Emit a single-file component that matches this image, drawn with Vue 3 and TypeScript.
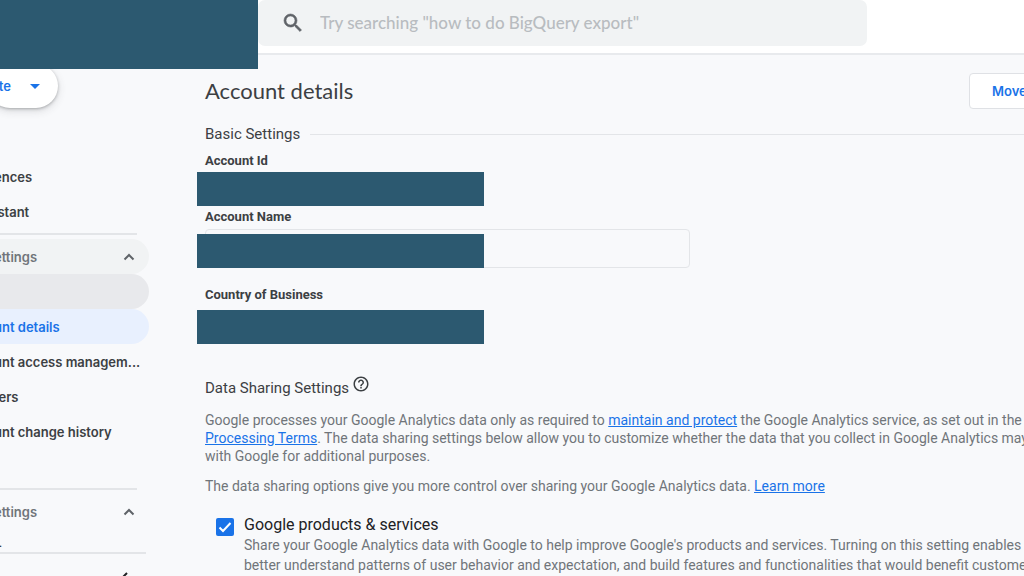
<script setup lang="ts">
import { ref } from 'vue'

interface NavItem {
  label: string
  kind?: 'group' | 'hover' | 'active'
}

const topItems: NavItem[] = [{ label: 'ences' }, { label: 'istant' }]
const accountItems: NavItem[] = [
  { label: 'ettings', kind: 'group' },
  { label: '', kind: 'hover' },
  { label: 'unt details', kind: 'active' },
  { label: 'unt access managem...' },
  { label: 'ters' },
  { label: 'unt change history' },
]
const shareData = ref(true)
</script>

<template>
  <div class="app">
    <header class="topbar">
      <div class="search">
        <svg class="search-icon" viewBox="0 0 24 24" aria-hidden="true">
          <path d="M15.5 14h-.79l-.28-.27A6.47 6.47 0 0 0 16 9.5 6.5 6.5 0 1 0 9.5 16c1.61 0 3.09-.59 4.23-1.57l.27.28v.79l5 4.99L20.49 19l-4.99-5zm-6 0a4.5 4.5 0 1 1 0-9 4.5 4.5 0 0 1 0 9z" />
        </svg>
        <input type="search" aria-label="Search" placeholder="Try searching &quot;how to do BigQuery export&quot;" />
      </div>
      <div class="brand-mask"></div>
    </header>

    <div class="body">
      <aside class="sidebar">
        <button class="create" type="button">
          <span>te</span>
          <svg viewBox="0 0 10 5" aria-hidden="true"><path d="M0 0h10L5 5z" /></svg>
        </button>

        <nav>
          <a v-for="item in topItems" :key="item.label" href="#" class="item">{{ item.label }}</a>
          <hr />
          <div class="section">
            <a v-for="item in accountItems" :key="item.label" href="#" class="item" :class="item.kind">
              <span>{{ item.label }}</span>
              <svg v-if="item.kind === 'group'" class="chevron" viewBox="0 0 12 8" aria-hidden="true">
                <path d="M1.5 6.5 6 2l4.5 4.5" />
              </svg>
            </a>
          </div>
          <hr />
          <a href="#" class="item group plain">
            <span>ettings</span>
            <svg class="chevron" viewBox="0 0 12 8" aria-hidden="true">
              <path d="M1.5 6.5 6 2l4.5 4.5" />
            </svg>
          </a>
          <div class="cut-row">-</div>
        </nav>
        <div class="collapse">
          <button type="button" aria-label="Collapse">
            <svg viewBox="0 0 8 12" aria-hidden="true"><path d="M7 1 2 6l5 5" /></svg>
          </button>
        </div>
      </aside>

      <main>
        <div class="title-row">
          <h1>Account details</h1>
          <button class="move" type="button">Move</button>
        </div>

        <h2 class="ruled">Basic Settings</h2>

        <div class="field">
          <div class="label">Account Id</div>
          <div class="mask"></div>
        </div>
        <div class="field name">
          <label class="label" for="account-name">Account Name</label>
          <div class="input-wrap">
            <input id="account-name" type="text" />
            <div class="mask over"></div>
          </div>
        </div>
        <div class="field country">
          <div class="label">Country of Business</div>
          <div class="mask"></div>
        </div>

        <h2 class="sharing">
          Data Sharing Settings
          <svg viewBox="0 0 24 24" aria-hidden="true">
            <path d="M11 18h2v-2h-2v2zm1-16C6.48 2 2 6.48 2 12s4.48 10 10 10 10-4.48 10-10S17.52 2 12 2zm0 18c-4.41 0-8-3.59-8-8s3.59-8 8-8 8 3.59 8 8-3.59 8-8 8zm0-14c-2.21 0-4 1.79-4 4h2c0-1.1.9-2 2-2s2 .9 2 2c0 2-3 1.75-3 5h2c0-2.25 3-2.5 3-5 0-2.21-1.79-4-4-4z" />
          </svg>
        </h2>

        <p>
          Google processes your Google Analytics data only as required to <a href="#">maintain and protect</a> the Google Analytics service, as set out in the<br />
          <a href="#">Processing Terms</a>. The data sharing settings below allow you to customize whether the data that you collect in Google Analytics may<br />
          with Google for additional purposes.
        </p>
        <p>
          The data sharing options give you more control over sharing your Google Analytics data. <a href="#">Learn more</a>
        </p>

        <div class="option">
          <input id="share" v-model="shareData" type="checkbox" />
          <svg class="tick" viewBox="0 0 18 18" aria-hidden="true"><path d="M3.5 9.5 7 13l7.5-8" /></svg>
          <div>
            <label for="share">Google products &amp; services</label>
            <p>
              Share your Google Analytics data with Google to help improve Google's products and services. Turning on this setting enables<br />
              better understand patterns of user behavior and expectation, and build features and functionalities that would benefit custome
            </p>
          </div>
        </div>
      </main>
    </div>
  </div>
</template>

<style>
body {
  margin: 0;
}
</style>

<style scoped>
.app {
  height: 100vh;
  overflow: hidden;
  display: flex;
  flex-direction: column;
  background: #f8f9fb;
  color: #3c4043;
  font-family: Roboto, "Liberation Sans", sans-serif;
  font-size: 14px;
}
* {
  box-sizing: border-box;
}
button,
input {
  font: inherit;
}
.topbar {
  position: relative;
  z-index: 2;
  flex: none;
  height: 55px;
  padding: 0 157px 7px 258px;
  background: #fff;
  border-bottom: 2px solid #e8eaed;
}
.brand-mask {
  position: absolute;
  top: 0;
  left: 0;
  width: 258px;
  height: 69px;
  background: #2c5970;
}
.search {
  display: flex;
  align-items: center;
  height: 46px;
  padding-left: 23px;
  gap: 15px;
  background: #f1f3f4;
  border-radius: 7px;
}
.search-icon {
  width: 24px;
  height: 24px;
  fill: #5f6368;
  stroke: #5f6368;
  stroke-width: 0.6;
}
.search input {
  flex: 1;
  padding: 0 0 2px;
  border: 0;
  outline: 0;
  background: none;
  font-family: Lato, sans-serif;
  font-weight: 500;
  font-size: 17px;
}
.search input::placeholder {
  color: #b8bcc0;
}
.body {
  flex: 1;
  min-height: 0;
  display: flex;
}
.sidebar {
  flex: none;
  width: 205px;
  padding-top: 9px;
  font-family: Inter, sans-serif;
  font-weight: 600;
  font-size: 13px;
}
.create {
  display: flex;
  align-items: center;
  justify-content: flex-end;
  gap: 19px;
  width: 70px;
  height: 44px;
  margin: 0 0 51px -12px;
  padding: 0 18px 0 0;
  border: 0;
  border-radius: 22px;
  background: #fff;
  box-shadow: 0 1px 3px rgba(60, 64, 67, 0.35), 0 3px 8px rgba(60, 64, 67, 0.16);
  color: #1a73e8;
}
.create svg {
  width: 10px;
  height: 5px;
  fill: #1a73e8;
}
.item {
  display: flex;
  align-items: center;
  justify-content: space-between;
  width: 155px;
  height: 35px;
  margin-left: -6px;
  padding-right: 14px;
  border-radius: 0 18px 18px 0;
  color: #3c4043;
  text-decoration: none;
  white-space: nowrap;
}
.group {
  background: #f1f3f4;
  color: #70757a;
}
.plain {
  background: none;
}
.hover {
  background: #e8e9ec;
}
.active {
  background: #e8f0fe;
  color: #1a73e8;
}
.chevron {
  width: 12px;
  height: 8px;
  fill: none;
  stroke: #5f6368;
  stroke-width: 2;
}
hr {
  width: 137px;
  height: 2px;
  margin: 4px 0;
  border: 0;
  background: #e3e5e8;
}
.section {
  padding-bottom: 35px;
}
.cut-row {
  height: 23px;
  line-height: 32px;
  margin-left: -4px;
  overflow: hidden;
}
.collapse {
  width: 146px;
  border-top: 2px solid #e3e5e8;
  display: flex;
  justify-content: flex-end;
}
.collapse button {
  margin: 18px 18px 0 0;
  padding: 0;
  border: 0;
  background: none;
}
.collapse svg {
  display: block;
  width: 8px;
  height: 12px;
  fill: none;
  stroke: #202124;
  stroke-width: 2;
}
main {
  flex: 1;
  min-width: 0;
  padding-top: 18px;
  white-space: nowrap;
}
.title-row {
  display: flex;
  align-items: center;
  justify-content: space-between;
  height: 36px;
  margin-bottom: 15px;
}
h1 {
  margin: 0;
  padding-bottom: 2px;
  font-family: Lato, sans-serif;
  font-size: 22px;
  font-weight: 400;
}
.move {
  flex: none;
  width: 120px;
  height: 36px;
  margin-right: -65px;
  padding: 0 22px;
  text-align: left;
  border: 1px solid #dfe1e5;
  border-radius: 4px;
  background: #fff;
  color: #1a73e8;
  font-family: Inter, sans-serif;
  font-size: 13px;
  font-weight: 600;
}
h2 {
  margin: 0;
  font-size: 15px;
  line-height: 20px;
  font-weight: 400;
}
.ruled {
  display: flex;
  align-items: center;
  gap: 10px;
  margin-bottom: 8px;
}
.ruled::after {
  content: "";
  flex: 1;
  height: 1px;
  background: #e3e5e8;
}
.label {
  display: block;
  height: 20px;
  line-height: 17px;
  font-size: 13px;
  font-weight: 700;
}
.mask {
  width: 287px;
  height: 34px;
  margin: 0 0 2px -8px;
  background: #2c5970;
}
.name {
  margin-bottom: 18px;
}
.name .label {
  height: 21px;
}
.country .label {
  height: 24px;
}
.input-wrap {
  position: relative;
  width: 485px;
}
.input-wrap input {
  display: block;
  width: 100%;
  height: 39px;
  padding: 0 12px;
  border: 1px solid #e3e5e8;
  border-radius: 4px;
  background: transparent;
}
.over {
  position: absolute;
  left: 0;
  bottom: 0;
  margin-bottom: 0;
}
.sharing {
  display: flex;
  align-items: center;
  gap: 3px;
  margin: 31px 0 11px;
}
.sharing svg {
  width: 18px;
  height: 18px;
  margin-bottom: 7px;
  fill: #3c4043;
}
p {
  margin: 0 0 12px;
  line-height: 18px;
  color: #70757a;
}
p a {
  color: #1a73e8;
}
.option {
  position: relative;
  display: flex;
  gap: 10px;
  padding: 8px 0 0 11px;
}
.option input {
  appearance: none;
  flex: none;
  width: 18px;
  height: 18px;
  margin: 3px 0 0;
  border-radius: 2px;
  background: #1a73e8;
}
.tick {
  position: absolute;
  left: 11px;
  top: 11px;
  width: 18px;
  height: 18px;
  fill: none;
  stroke: #fff;
  stroke-width: 2;
  pointer-events: none;
}
.option label {
  display: block;
  font-size: 16px;
  line-height: 20px;
  color: #202124;
}
.option p {
  line-height: 20px;
}
</style>
